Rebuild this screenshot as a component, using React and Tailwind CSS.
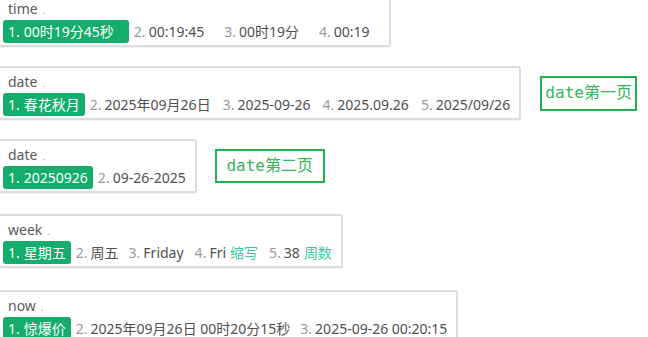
import React from "react";

const FONT = { fontFamily: "'Noto Sans', 'Noto Sans CJK SC', sans-serif" };
const MONO = { fontFamily: "'DejaVu Sans Mono', 'Noto Sans CJK SC', monospace" };

function Cand({ n, text, comment, first, ml, pr }) {
  if (first) {
    return (
      <span
        className={`flex h-[23px] items-center whitespace-nowrap rounded-[3px] bg-[#14ad6b] pl-[5px] text-white ${pr || "pr-[5px]"}`}
      >
        {n}.<span className="ml-[4px]">{text}</span>
      </span>
    );
  }
  return (
    <span className={`flex h-[23px] items-center whitespace-nowrap ${ml || "ml-[10px]"}`}>
      <span className="text-[#9a9a9a]">{n}.</span>
      <span className="ml-[3px] text-[#505050]">{text}</span>
      {comment && <span className="ml-[4px] text-[#3fc6a2]">{comment}</span>}
    </span>
  );
}

function Box({ label, children, pr }) {
  return (
    <div
      className={`-ml-[2px] flex w-fit flex-col rounded-[3px] border-2 border-[#dddddd] bg-white pl-[3px] pt-[3px] pb-[2px] shadow-[0_1px_1px_rgba(0,0,0,0.06)] ${pr || "pr-[9px]"}`}
    >
      <div className="flex h-[20px] items-center pl-[5px] text-[#5a5a5a]">
        {label}
        <span className="ml-[5px] mt-[6px] text-[9px] text-[#888]">.</span>
      </div>
      <div className="mt-[2px] flex items-center text-[14px]">{children}</div>
    </div>
  );
}

function Note({ text, w, h }) {
  return (
    <div
      className={`flex items-center justify-center border-2 border-[#22b04b] text-[16px] text-[#35b65b] ${w} ${h}`}
      style={MONO}
    >
      {text}
    </div>
  );
}

export default function App() {
  return (
    <div className="h-[337px] w-[648px] overflow-hidden bg-white text-[14px]" style={FONT}>
      <div className="-mt-[7px] flex flex-col">
        <Box label="time" pr="pr-[19px]">
          <Cand first n="1" text="00时19分45秒" pr="pr-[15px]" />
          <Cand n="2" text="00:19:45" ml="ml-[5px]" />
          <Cand n="3" text="00时19分" ml="ml-[20px]" />
          <Cand n="4" text="00:19" ml="ml-[20px]" />
        </Box>

        <div className="mt-[19px] flex items-center gap-[19px]">
          <Box label="date">
            <Cand first n="1" text="春花秋月" />
            <Cand n="2" text="2025年09月26日" ml="ml-[5px]" />
            <Cand n="3" text="2025-09-26" ml="ml-[12px]" />
            <Cand n="4" text="2025.09.26" ml="ml-[12px]" />
            <Cand n="5" text="2025/09/26" ml="ml-[12px]" />
          </Box>
          <Note text="date第一页" w="w-[97px]" h="h-[35px]" />
        </div>

        <div className="mt-[19px] flex items-center gap-[18px]">
          <Box label="date">
            <Cand first n="1" text="20250926" />
            <Cand n="2" text="09-26-2025" ml="ml-[5px]" />
          </Box>
          <Note text="date第二页" w="w-[110px]" h="h-[34px]" />
        </div>

        <div className="mt-[21px]">
          <Box label="week">
            <Cand first n="1" text="星期五" />
            <Cand n="2" text="周五" ml="ml-[5px]" />
            <Cand n="3" text="Friday" />
            <Cand n="4" text="Fri" comment="缩写" ml="ml-[11px]" />
            <Cand n="5" text="38" comment="周数" ml="ml-[11px]" />
          </Box>
        </div>

        <div className="mt-[22px]">
          <Box label="now">
            <Cand first n="1" text="惊爆价" />
            <Cand n="2" text="2025年09月26日 00时20分15秒" ml="ml-[5px]" />
            <Cand n="3" text="2025-09-26 00:20:15" />
          </Box>
        </div>
      </div>
    </div>
  );
}
